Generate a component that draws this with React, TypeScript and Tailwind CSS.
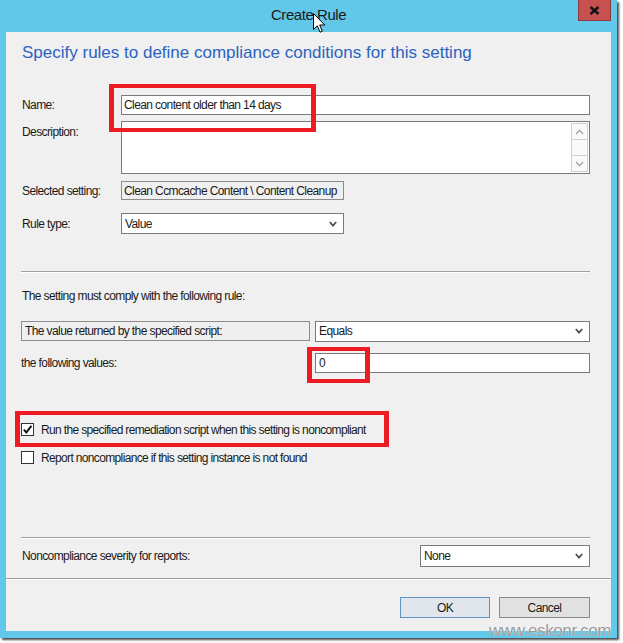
import React from "react";

function Chevron() {
  return (
    <svg width="8" height="6" viewBox="0 0 8 6" className="shrink-0">
      <path d="M0.8 1 L4 4.6 L7.2 1" fill="none" stroke="#4d4d4d" strokeWidth="1.7" />
    </svg>
  );
}

function SelectBox({ value, className }: { value: string; className: string }) {
  return (
    <div className={`flex items-center justify-between bg-white border border-[#7a7a7a] pl-[3px] pr-[6px] ${className}`}>
      <span>{value}</span>
      <Chevron />
    </div>
  );
}

function Label({ children, className = "" }: { children: React.ReactNode; className?: string }) {
  return <div className={`w-[100px] shrink-0 pl-[1px] ${className}`}>{children}</div>;
}

function Etched({ className = "" }: { className?: string }) {
  return <div className={`h-[2px] border-t border-[#a0a0a0] border-b border-b-white ${className}`} />;
}

function CheckBox({ checked, label }: { checked?: boolean; label: string }) {
  return (
    <div className="flex items-center h-[13px]">
      <div className="w-[13px] h-[13px] border border-[#333333] bg-white flex items-center justify-center shrink-0">
        {checked && (
          <svg width="11" height="11" viewBox="0 0 11 11">
            <path d="M1.8 5.6 L4.3 8.4 L9.4 1.8" fill="none" stroke="#111" strokeWidth="1.9" />
          </svg>
        )}
      </div>
      <span className="ml-[7px] whitespace-nowrap tracking-[-0.65px]">{label}</span>
    </div>
  );
}

export default function App() {
  return (
    <div className="relative w-[623px] h-[643px] bg-white font-['Liberation_Sans',Arial,sans-serif] text-[12px] leading-[16px] tracking-[-0.6px] text-[#1a1a1a] overflow-hidden">
      <div className="w-[617px] h-[638px] bg-[#62c8ea] flex flex-col shadow-[2px_2px_2px_rgba(0,0,0,0.7)]">
        {/* title bar */}
        <div className="relative h-[32px] shrink-0 flex justify-center">
          <span className="mt-[6px] text-[15px] leading-[18px] tracking-[-0.45px] text-[#1b1b1b]">Create Rule</span>
          <div className="absolute top-0 right-[6px] w-[33px] h-[21px] bg-[#c75050] border border-t-0 border-[#8e3b3b] flex items-center justify-center">
            <svg width="11" height="9" viewBox="0 0 11 9">
              <path d="M1.5 1 L9.5 8 M9.5 1 L1.5 8" stroke="#111" strokeWidth="2.4" />
            </svg>
          </div>
        </div>

        {/* client area */}
        <div className="mx-[6px] mb-[7px] flex-1 bg-[#f0f0f0] flex flex-col">
          <div className="pt-[11px] pl-[16px] text-[17px] leading-[20px] tracking-[0px] text-[#2b63c0]">
            Specify rules to define compliance conditions for this setting
          </div>

          <div className="pl-[15px] pr-[21px] flex flex-col">
            <div className="mt-[32px] flex items-center h-[20px]">
              <Label>Name:</Label>
              <div className="flex-1 h-[20px] bg-white border border-[#7a7a7a] pl-[2px] flex items-center">
                Clean content older than 14 days
              </div>
            </div>

            <div className="mt-[6px] flex h-[53px]">
              <Label className="pt-[3px]">Description:</Label>
              <div className="flex-1 bg-white border border-[#7a7a7a] flex justify-end p-px">
                <div className="w-[17px] flex flex-col border border-[#cfcfcf] bg-[#fafafa]">
                  <div className="h-[16px] flex items-center justify-center border-b border-[#cfcfcf]">
                    <svg width="9" height="6" viewBox="0 0 9 6">
                      <path d="M1 5 L4.5 1.4 L8 5" fill="none" stroke="#9a9a9a" strokeWidth="1.2" />
                    </svg>
                  </div>
                  <div className="flex-1" />
                  <div className="h-[16px] flex items-center justify-center border-t border-[#cfcfcf]">
                    <svg width="9" height="6" viewBox="0 0 9 6">
                      <path d="M1 1 L4.5 4.6 L8 1" fill="none" stroke="#9a9a9a" strokeWidth="1.2" />
                    </svg>
                  </div>
                </div>
              </div>
            </div>

            <div className="mt-[7px] flex items-center h-[19px]">
              <Label>Selected setting:</Label>
              <div className="w-[223px] h-[19px] bg-[#f0f0f0] border border-[#8c8c8c] pl-[2px] flex items-center whitespace-nowrap overflow-hidden">
                Clean Ccmcache Content \ Content Cleanup
              </div>
            </div>

            <div className="mt-[13px] flex items-center h-[21px]">
              <Label>Rule type:</Label>
              <SelectBox value="Value" className="w-[223px] h-[21px]" />
            </div>

            <Etched className="mt-[37px]" />

            <div className="mt-[15px] pl-[1px]">The setting must comply with the following rule:</div>

            <div className="mt-[17px] flex items-center h-[20px] gap-[5px]">
              <div className="w-[289px] h-[20px] bg-[#efefef] border border-[#8c8c8c] pl-[3px] flex items-center">
                The value returned by the specified script:
              </div>
              <SelectBox value="Equals" className="flex-1 h-[21px]" />
            </div>

            <div className="mt-[12px] flex items-center h-[20px]">
              <div className="w-[294px] shrink-0">the following values:</div>
              <div className="flex-1 h-[20px] bg-white border border-[#7a7a7a] pl-[3px] flex items-center">0</div>
            </div>

            <div className="mt-[50px]">
              <CheckBox checked label="Run the specified remediation script when this setting is noncompliant" />
            </div>
            <div className="mt-[15px]">
              <CheckBox label="Report noncompliance if this setting instance is not found" />
            </div>

            <Etched className="mt-[73px]" />

            <div className="mt-[6px] flex items-center justify-between h-[22px]">
              <div className="pl-[1px]">Noncompliance severity for reports:</div>
              <SelectBox value="None" className="w-[170px] h-[22px]" />
            </div>
          </div>

          <Etched className="mt-[11px]" />

          <div className="mt-[17px] flex justify-end gap-[9px] pr-[21px]">
            <div className="w-[90px] h-[21px] bg-[#e1e6ec] border border-[#5d95c6] flex items-center justify-center">OK</div>
            <div className="w-[91px] h-[21px] bg-[#e1e1e1] border border-[#8a8a8a] flex items-center justify-center">Cancel</div>
          </div>
        </div>
      </div>

      {/* annotation overlays */}
      <div className="absolute left-[109px] top-[84px] w-[207px] h-[48px] border-[4px] border-x-[5px] border-[#ed1c24]" />
      <div className="absolute left-[307px] top-[347px] w-[63px] h-[36px] border-[4px] border-x-[5px] border-[#ed1c24]" />
      <div className="absolute left-[15px] top-[411px] w-[374px] h-[36px] border-[4px] border-x-[5px] border-[#ed1c24]" />

      <div className="absolute left-[489px] top-[621px] text-[17px] leading-[20px] tracking-[-0.4px] text-[#9a9a9a] [text-shadow:0_0_1px_#ffffff]">
        www.eskonr.com
      </div>

      <svg className="absolute left-[313px] top-[13px]" width="13" height="21" viewBox="0 0 13 21">
        <path d="M0.5 0.5 L0.5 16.5 L4.3 12.8 L7 19.2 L9.3 18.2 L6.7 12 L11.8 12 Z" fill="#fff" stroke="#000" strokeWidth="1" />
      </svg>
    </div>
  );
}
